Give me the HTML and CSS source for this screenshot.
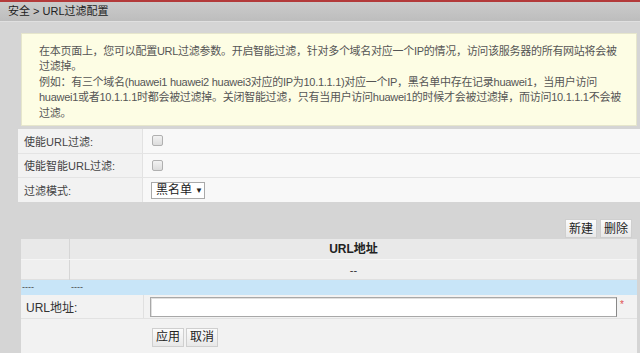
FILE: index.html
```html
<!DOCTYPE html>
<html lang="zh-CN">
<head>
<meta charset="utf-8">
<title>URL过滤配置</title>
<link rel="stylesheet" href="styles.css">
</head>
<body>
<div class="topline"></div>
<div class="header">安全 &gt; URL过滤配置</div>
<div class="content">
  <div class="info">
    <p>在本页面上，您可以配置URL过滤参数。开启智能过滤，针对多个域名对应一个IP的情况，访问该服务器的所有网站将会被<br>过滤掉。</p>
    <p>例如：有三个域名(huawei1 huawei2 huawei3对应的IP为10.1.1.1)对应一个IP，黑名单中存在记录huawei1，当用户访问<br>huawei1或者10.1.1.1时都会被过滤掉。关闭智能过滤，只有当用户访问huawei1的时候才会被过滤掉，而访问10.1.1.1不会被<br>过滤。</p>
  </div>

  <div class="form">
    <div class="row">
      <div class="label">使能URL过滤:</div>
      <div class="value"><input type="checkbox" class="cb"></div>
    </div>
    <div class="row">
      <div class="label">使能智能URL过滤:</div>
      <div class="value"><input type="checkbox" class="cb"></div>
    </div>
    <div class="row">
      <div class="label">过滤模式:</div>
      <div class="value"><span class="select">黑名单 <span class="arrow">▼</span></span></div>
    </div>
  </div>

  <div class="toolbar">
    <button class="btn">新建</button>
    <button class="btn">删除</button>
  </div>

  <div class="list">
    <div class="lrow lhead">
      <div class="c1"></div>
      <div class="c2">URL地址</div>
    </div>
    <div class="lrow lempty">
      <div class="c1"></div>
      <div class="c2">--</div>
    </div>
    <div class="lrow lsel">
      <div class="c1">----</div>
      <div class="c2 left">----</div>
    </div>
  </div>

  <div class="edit">
    <div class="erow">
      <div class="elabel">URL地址:</div>
      <div class="evalue"><span class="input"></span><span class="req">*</span></div>
    </div>
    <div class="erow eacts">
      <div class="elabel"></div>
      <div class="evalue"><button class="btn">应用</button><button class="btn">取消</button></div>
    </div>
  </div>
</div>
</body>
</html>
```
FILE: styles.css
```css
* { box-sizing: border-box; }
html, body {
  margin: 0;
  padding: 0;
  background: #d5d5d5;
  font-family: "Liberation Sans", "Noto Sans CJK SC", sans-serif;
  font-size: 11px;
  color: #333;
}
.topline {
  height: 2px;
  background: #b33a3a;
}
.header {
  height: 20px;
  line-height: 19px;
  padding-left: 8px;
  font-size: 11px;
  color: #222;
  background: linear-gradient(#cbcbcb, #bdbdbd);
  border-bottom: 1px solid #e0e0e0;
}
.content {
  padding: 11px 0 0 18px;
}
.info {
  margin: 0 3px 0 3px;
  background: #fdfde4;
  border: 1px solid #e6e6cc;
  padding: 10px 4px 4px 17px;
  line-height: 15.4px;
  color: #555;
  white-space: nowrap;
  letter-spacing: -0.28px;
}
.info p { margin: 0; }
.form {
  margin-top: 3px;
}
.row {
  display: grid;
  grid-template-columns: 125px 1fr;
  height: 24.5px;
  border-bottom: 1px solid #e4e4e4;
}
.row:last-child { border-bottom: none; height: 24px; }
.label {
  background: #f2f2f2;
  border-right: 1px solid #e2e2e2;
  padding-left: 6px;
  display: flex;
  align-items: center;
  color: #444;
}
.value {
  background: #f8f8f8;
  display: flex;
  align-items: center;
  padding-left: 8px;
}
.cb {
  appearance: none;
  -webkit-appearance: none;
  margin: 0 0 0 1px;
  width: 11px;
  height: 11px;
  border: 1px solid #b0b0b0;
  border-radius: 2px;
  background: linear-gradient(#f2f2f2, #dcdcdc);
}
.select {
  display: inline-flex;
  align-items: center;
  white-space: nowrap;
  height: 17px;
  width: 54px;
  border: 1px solid #a9a9a9;
  background: #fff;
  padding-left: 4px;
  font-size: 12px;
  line-height: 15px;
  color: #222;
}
.arrow {
  font-size: 8px;
  margin-left: 3px;
}
.toolbar {
  display: flex;
  justify-content: flex-end;
  gap: 3px;
  padding: 17px 8px 1px 0;
}
.btn {
  font-family: "Liberation Sans", "Noto Sans CJK SC", sans-serif;
  font-size: 12px;
  color: #222;
  height: 19px;
  padding: 0 3px;
  margin: 0;
  border: 1px solid #cfcfcf;
  background: linear-gradient(#fbfbfb, #e8e8e8);
  line-height: 16px;
}
.list {
  margin: 0 3px 0 3px;
}
.lrow {
  display: grid;
  grid-template-columns: 49px 1fr;
}
.lrow .c1 { border-right: 1px solid #d6d6d6; }
.lrow .c2 { text-align: center; }
.lhead {
  height: 21px;
  background: #e9e9e9;
  font-weight: bold;
  font-size: 12px;
  color: #222;
  line-height: 20px;
  border-bottom: 1px solid #f6f6f6;
}
.lempty {
  height: 20px;
  background: #efefef;
  line-height: 20px;
  color: #333;
  border-bottom: 1px solid #e0e0e0;
}
.lsel {
  height: 15px;
  background: #c8e5f8;
  line-height: 14px;
  font-size: 9px;
  color: #444;
}
.lsel .c1 { border-right: none; padding-left: 1px; }
.lsel .c2.left { text-align: left; padding-left: 1px; }
.edit {
  margin: 0 3px 0 3px;
  border-bottom: 2px solid #e6e6e6;
}
.erow {
  display: grid;
  grid-template-columns: 123px 1fr;
  height: 24px;
  background: #f2f2f2;
  border-bottom: 1px solid #e2e2e2;
}
.elabel {
  display: flex;
  align-items: center;
  padding-left: 5px;
  font-size: 12px;
  color: #333;
  border-right: 1px solid #e0e0e0;
}
.evalue {
  display: flex;
  align-items: center;
  padding-left: 6px;
}
.input {
  display: block;
  width: 467px;
  height: 20px;
  background: #fff;
  border: 1px solid #a8a8a8;
  border-right-color: #888;
  box-shadow: inset 1px 1px 0 #e0e0e0;
}
.req {
  color: #e05050;
  font-size: 10px;
  align-self: flex-start;
  margin: 4px 0 0 3px;
}
.eacts {
  height: 34px;
  border-bottom: none;
}
.eacts .elabel { border-right: none; }
.eacts .evalue { gap: 2px; padding-left: 8px; padding-top: 2px; }
```
